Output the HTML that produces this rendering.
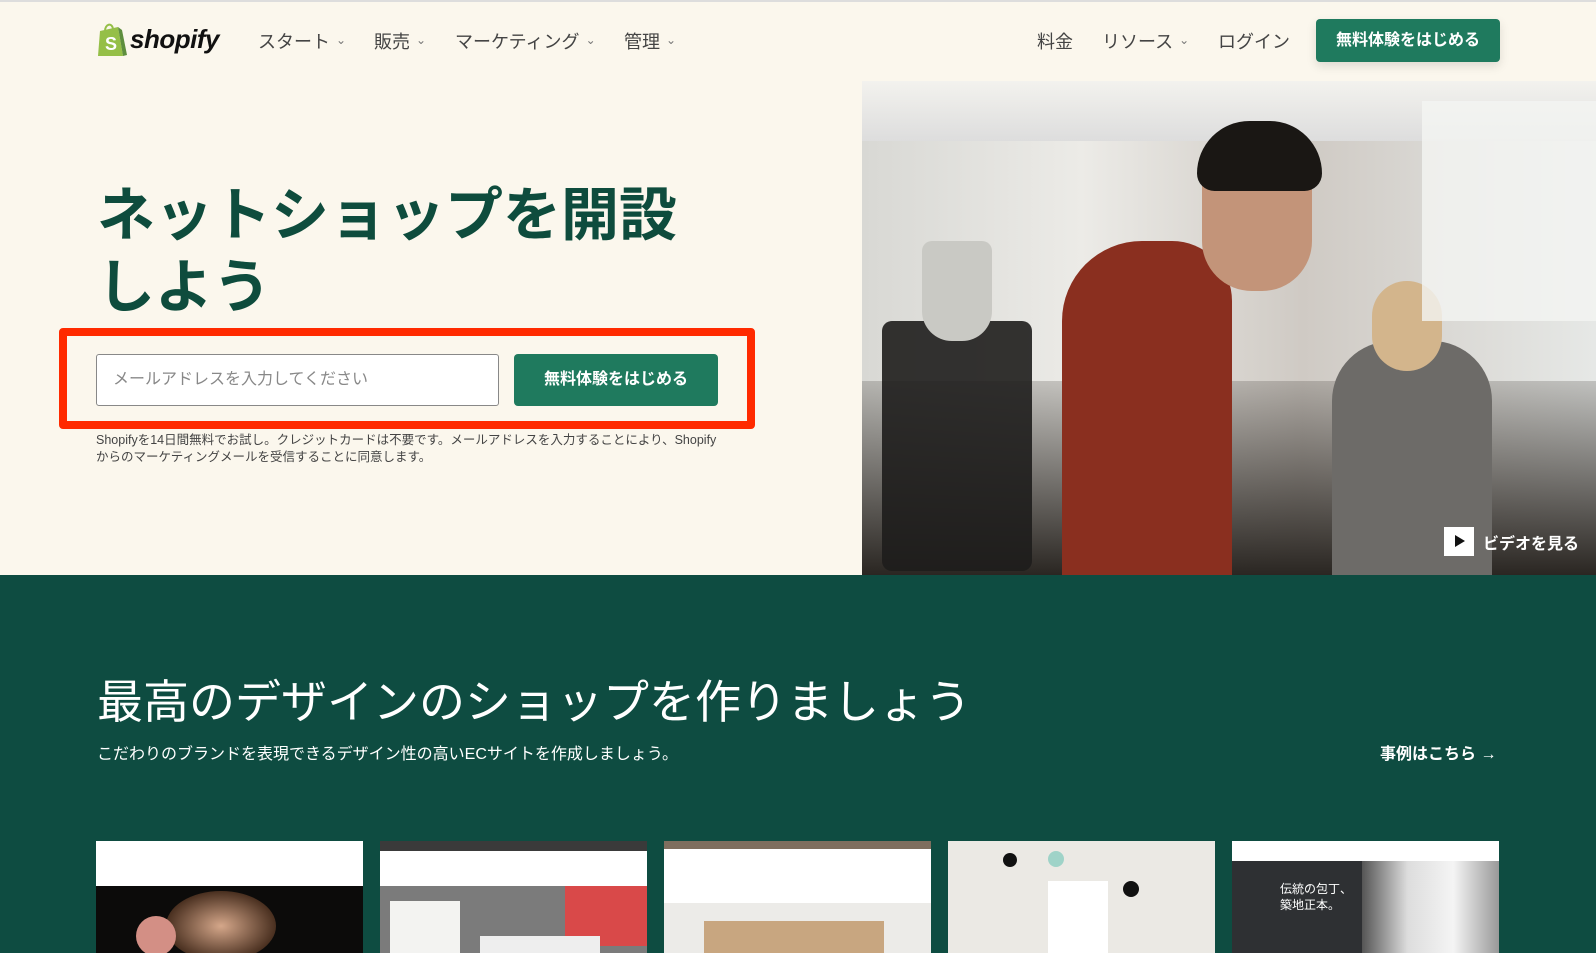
<!DOCTYPE html>
<html><head><meta charset="utf-8">
<style>
*{margin:0;padding:0;box-sizing:border-box}
body{width:1596px;height:953px;overflow:hidden;background:#fbf7ed;font-family:"Liberation Sans","Noto Sans CJK JP",sans-serif;position:relative}
.a{position:absolute}
.nav{font-size:18px;color:#444;top:28px;white-space:nowrap}
.nav small{font-size:12px;color:#777;margin-left:6px;position:relative;top:-4px}
.btn{background:#1f7a5e;color:#fff;font-weight:bold;text-align:center;border-radius:4px}
.card{top:841px;width:267px;height:112px;overflow:hidden}
</style></head><body>
<div class="a" style="left:0;top:0;width:1596px;height:2px;background:#ddd"></div>
<svg class="a" style="left:96px;top:22px" width="32" height="36" viewBox="0 0 32 36"><path d="M4 9 L22 5 L27 34 L2 34 Z" fill="#95bf47"/><path d="M22 5 L27 34 L31 33 L26 8 Z" fill="#5e8e3e"/><path d="M9 9 C9 2 16 0 17 7" stroke="#95bf47" stroke-width="2" fill="none"/><text x="9" y="28" font-size="18" font-weight="bold" fill="#fff" font-family="Liberation Sans">S</text></svg>
<div class="a" style="left:130px;top:24px;font-size:26px;font-weight:bold;font-style:italic;color:#111;letter-spacing:-0.5px">shopify</div>
<div class="a nav" style="left:258px">スタート<small>⌄</small></div>
<div class="a nav" style="left:374px">販売<small>⌄</small></div>
<div class="a nav" style="left:455px">マーケティング<small>⌄</small></div>
<div class="a nav" style="left:624px">管理<small>⌄</small></div>
<div class="a nav" style="left:1037px">料金</div>
<div class="a nav" style="left:1102px">リソース<small>⌄</small></div>
<div class="a nav" style="left:1218px">ログイン</div>
<div class="a btn" style="left:1316px;top:19px;width:184px;height:43px;line-height:43px;font-size:16px;box-shadow:0 4px 10px rgba(0,0,0,.12)">無料体験をはじめる</div>
<div class="a" style="left:97px;top:180px;font-size:58px;font-weight:bold;color:#0e4c3d;line-height:72px">ネットショップを開設<br>しよう</div>
<div class="a" style="left:59px;top:328px;width:696px;height:101px;border:8px solid #ff2a00;border-radius:4px"></div>
<div class="a" style="left:96px;top:354px;width:403px;height:52px;background:#fff;border:1px solid #888;border-radius:3px;font-size:16px;color:#888;line-height:50px;padding-left:16px">メールアドレスを入力してください</div>
<div class="a btn" style="left:514px;top:354px;width:204px;height:52px;line-height:52px;font-size:16px">無料体験をはじめる</div>
<div class="a" style="left:96px;top:432px;font-size:12.5px;color:#444;line-height:17px;width:625px">Shopifyを14日間無料でお試し。クレジットカードは不要です。メールアドレスを入力することにより、Shopifyからのマーケティングメールを受信することに同意します。</div>
<div class="a" style="left:862px;top:81px;width:734px;height:494px;overflow:hidden;background:linear-gradient(90deg,#d8d8d4 0%,#ecebe7 30%,#cfcac4 60%,#e6e8e6 100%)">
 <div class="a" style="left:0;top:0;width:734px;height:60px;background:linear-gradient(#f3f2ee,#ddd)"></div>
 <div class="a" style="left:0;top:300px;width:734px;height:194px;background:linear-gradient(rgba(40,35,30,.2),#2a2622)"></div>
 <div class="a" style="left:20px;top:240px;width:150px;height:250px;background:#1e1d1c;border-radius:10px;opacity:.9"></div>
 <div class="a" style="left:60px;top:160px;width:70px;height:100px;background:#c9c9c4;border-radius:10px 10px 30px 30px"></div>
 <div class="a" style="left:200px;top:160px;width:170px;height:334px;background:#8a2f1f;border-radius:80px 60px 0 0"></div>
 <div class="a" style="left:340px;top:50px;width:110px;height:160px;background:#c39479;border-radius:50px"></div>
 <div class="a" style="left:335px;top:40px;width:125px;height:70px;background:#1a1714;border-radius:60px 60px 20px 20px"></div>
 <div class="a" style="left:470px;top:260px;width:160px;height:234px;background:#6d6b68;border-radius:60px 60px 0 0"></div>
 <div class="a" style="left:510px;top:200px;width:70px;height:90px;background:#d3b58c;border-radius:35px"></div>
 <div class="a" style="left:560px;top:20px;width:180px;height:220px;background:#f4f5f3;opacity:.8"></div>
</div>
<div class="a" style="left:1444px;top:527px;width:30px;height:29px;background:#fff"></div>
<div class="a" style="left:1455px;top:535px;width:0;height:0;border-left:10px solid #111;border-top:6px solid transparent;border-bottom:6px solid transparent"></div>
<div class="a" style="left:1483px;top:530px;font-size:16px;color:#fff;font-weight:bold">ビデオを見る</div>
<div class="a" style="left:0;top:575px;width:1596px;height:378px;background:#0e4c41"></div>
<div class="a" style="left:97px;top:666px;font-size:46px;color:#fff">最高のデザインのショップを作りましょう</div>
<div class="a" style="left:97px;top:740px;font-size:16px;color:#fff">こだわりのブランドを表現できるデザイン性の高いECサイトを作成しましょう。</div>
<div class="a" style="left:1380px;top:740px;font-size:16px;color:#fff;font-weight:bold">事例はこちら →</div>
<div class="a card" style="left:96px;background:linear-gradient(#fff 0,#fff 45px,#0c0b0a 45px)"><div class="a" style="left:70px;top:50px;width:110px;height:70px;background:radial-gradient(#d5a78a,#4a3020 70%);border-radius:50%"></div><div class="a" style="left:40px;top:75px;width:40px;height:40px;background:#d38f85;border-radius:50%"></div></div>
<div class="a card" style="left:380px;background:linear-gradient(#3a3a3a 0,#3a3a3a 10px,#fff 10px,#fff 45px,#7b7b7b 45px)"><div class="a" style="left:185px;top:45px;width:82px;height:60px;background:#d94949"></div><div class="a" style="left:100px;top:95px;width:120px;height:20px;background:#eee"></div><div class="a" style="left:10px;top:60px;width:70px;height:60px;background:#f3f3f1"></div></div>
<div class="a card" style="left:664px;background:linear-gradient(#7e6e5e 0,#7e6e5e 8px,#fff 8px,#fff 62px,#ecebe8 62px)"><div class="a" style="left:40px;top:80px;width:180px;height:40px;background:#c8a680"></div></div>
<div class="a card" style="left:948px;background:#ebe9e4"><div class="a" style="left:55px;top:12px;width:14px;height:14px;background:#111;border-radius:50%"></div><div class="a" style="left:175px;top:40px;width:16px;height:16px;background:#111;border-radius:50%"></div><div class="a" style="left:100px;top:10px;width:16px;height:16px;background:#9fd3c8;border-radius:50%"></div><div class="a" style="left:100px;top:40px;width:60px;height:72px;background:#fff"></div></div>
<div class="a card" style="left:1232px;background:linear-gradient(#fff 0,#fff 20px,#2e3033 20px)"><div class="a" style="left:130px;top:20px;width:137px;height:92px;background:linear-gradient(90deg,#555,#ddd,#f4f4f4,#999)"></div><div class="a" style="left:48px;top:40px;font-size:12px;color:#fff;line-height:16px">伝統の包丁、<br>築地正本。</div></div>
</body></html>
